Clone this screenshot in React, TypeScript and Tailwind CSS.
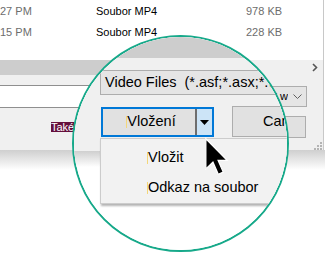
import React from 'react';

function Row({ time, size }: { time: string; size: string }) {
  return (
    <div className="h-[21px] flex items-center text-[11px] whitespace-nowrap">
      <span className="w-[96px] text-[#6d6d6d]">{time}</span>
      <span className="w-[150px] text-black">Soubor MP4</span>
      <span className="text-[#6d6d6d]">{size}</span>
    </div>
  );
}

function Fringe() {
  // ClearType colour fringe left of the magnified glyphs
  return <span className="inline-block w-[1px] h-[12px] bg-[#f3d77a]" />;
}

function Cursor() {
  return (
    <svg
      className="absolute left-[130px] top-[100px]"
      width="25"
      height="39"
      viewBox="0 0 14 22"
    >
      <path
        d="M1 1 L1 18 L5 14.2 L8 21 L10.8 19.8 L7.9 13.2 L13 13.2 Z"
        fill="#000"
        stroke="#fff"
        strokeWidth="0.7"
        strokeLinejoin="miter"
      />
    </svg>
  );
}

function Grip() {
  return (
    <svg width="9" height="9" viewBox="0 0 9 9" fill="#b4b4b4">
      <rect x="7" y="1" width="2" height="2" />
      <rect x="4" y="4" width="2" height="2" />
      <rect x="7" y="4" width="2" height="2" />
      <rect x="1" y="7" width="2" height="2" />
      <rect x="4" y="7" width="2" height="2" />
      <rect x="7" y="7" width="2" height="2" />
    </svg>
  );
}

export default function App() {
  return (
    <div className="relative w-[325px] h-[253px] overflow-hidden bg-white text-black font-['Liberation_Sans',Arial,sans-serif]">
      {/* Dialog at normal size */}
      <div className="w-[324px] border-r border-[#c8c8c8]">
        <div className="h-[60px] pt-[1px] bg-white">
          <Row time="27 PM" size="978 KB" />
          <Row time="15 PM" size="228 KB" />
        </div>

        {/* horizontal scrollbar */}
        <div className="h-[15px] flex bg-[#f0f0f0]">
          <div className="w-[250px] bg-[#cdcdcd]" />
          <div className="ml-auto w-[17px] flex items-center justify-center">
            <svg width="6" height="9" viewBox="0 0 6 9">
              <path d="M1 1 L4.5 4.5 L1 8" fill="none" stroke="#555" strokeWidth="1.6" />
            </svg>
          </div>
        </div>

        {/* bottom of dialog */}
        <div className="h-[75px] bg-[#f0f0f0] pt-[10px] flex flex-col">
          <div className="h-[23px] flex items-start">
            <div className="w-[110px] h-[23px] bg-white border-y border-[#8f8f8f]" />
            <div className="ml-[6px] mt-[1px] w-[191px] h-[21px] border border-[#adadad] bg-[#e5e5e5] flex items-center">
              <div className="flex-1 flex justify-end overflow-hidden whitespace-nowrap text-[11px] text-black">
                Video Files (*.asf;*.asx;*.w
              </div>
              <div className="w-[18px] flex items-center justify-center">
                <svg width="9" height="5" viewBox="0 0 9 5">
                  <path d="M0.5 0.5 L4.5 4.5 L8.5 0.5" fill="none" stroke="#606060" strokeWidth="1" />
                </svg>
              </div>
            </div>
          </div>

          <div className="mt-[8px] h-[22px] flex items-center">
            <span className="ml-[51px] h-[10px] leading-[10px] text-[11px] text-white bg-[#640f3c]">Také</span>
            <div className="ml-auto mr-[17px] w-[84px] h-[22px] border border-[#adadad] bg-[#e1e1e1]" />
          </div>

          <div className="mt-auto flex justify-end pr-[1px]">
            <Grip />
          </div>
        </div>
      </div>
      <div className="h-[20px] bg-gradient-to-b from-[#cfcfcf] to-white" />

      {/* Magnifier */}
      <div className="absolute left-[72px] top-[35px] w-[217px] h-[217px] rounded-full border-2 border-[#17a98a] overflow-hidden">
        <div className="relative w-full h-full bg-white">
          <div className="h-[21px] bg-[#cdcdcd]" />
          <div className="h-[93px] bg-[#f0f0f0] pl-[26px] pt-[12px]">
            <div className="w-[240px] h-[25px] border border-[#adadad] bg-[#e5e5e5] flex items-center pl-[4px] overflow-hidden whitespace-pre text-[14.5px]">
              {'Video Files  (*.asf;*.asx;*.wm;*.wmv)'}
            </div>

            <div className="mt-[12px] flex items-start">
              <div className="ml-[1px] w-[113px] h-[30px] border-2 border-[#0078d7] bg-[#e1e1e1] flex">
                <div className="w-[92px] pl-[4px] flex items-center justify-center text-[14.5px]">
                  <Fringe />
                  Vložení
                </div>
                <div className="w-[2px] bg-[#6e6e6e]" />
                <div className="w-[15px] bg-[#cce4f7] flex items-center justify-center">
                  <svg width="9" height="5" viewBox="0 0 9 5">
                    <path d="M0 0 L9 0 L4.5 5 Z" fill="#000" />
                  </svg>
                </div>
              </div>
              <div className="ml-[18px] -mt-[1px] w-[110px] h-[31px] border border-[#adadad] bg-[#e1e1e1] flex items-center pl-[30px] text-[14.5px]">
                Cancel
              </div>
            </div>
          </div>
          <div className="h-[16px] bg-gradient-to-b from-[#cfcfcf] to-white" />

          {/* split button menu */}
          <div className="absolute left-[26px] top-[101px] w-[230px] h-[66px] border border-[#cccccc] bg-[#f2f2f2] pt-[4px] shadow-[1px_2px_2px_rgba(0,0,0,0.3)] text-[14.5px]">
            <div className="h-[30px] flex items-center pl-[46px]">
              <Fringe />
              Vložit
            </div>
            <div className="h-[30px] flex items-center pl-[46px]">
              <Fringe />
              Odkaz na soubor
            </div>
          </div>

          <Cursor />
        </div>
      </div>
    </div>
  );
}
